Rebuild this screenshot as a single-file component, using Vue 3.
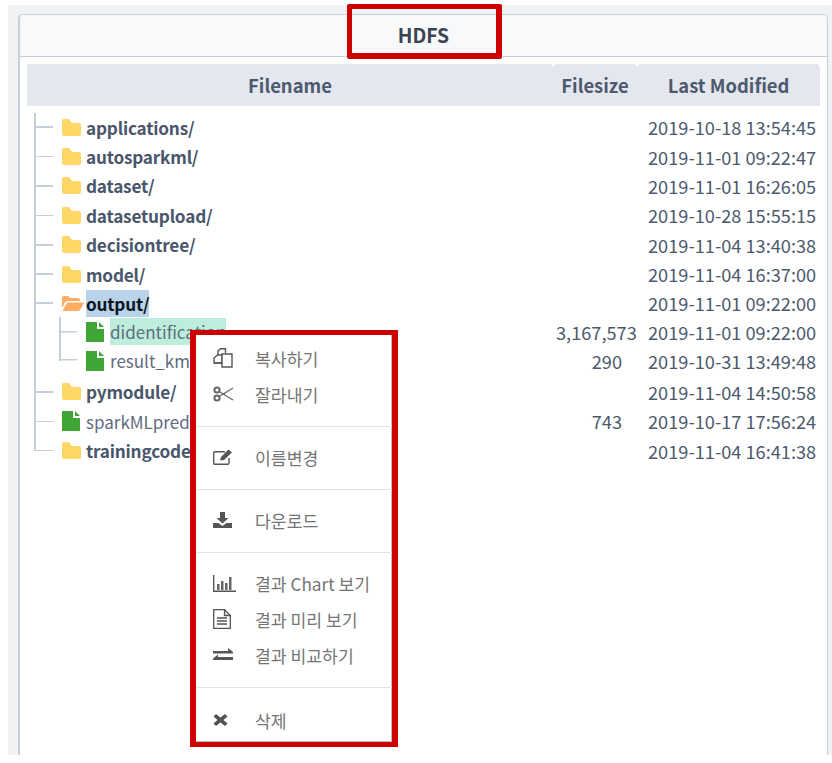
<script setup>
import { ref } from "vue";

const rows = ref([
  { name: "applications/", size: "", date: "2019-10-18 13:54:45", type: "folder" },
  { name: "autosparkml/", size: "", date: "2019-11-01 09:22:47", type: "folder" },
  { name: "dataset/", size: "", date: "2019-11-01 16:26:05", type: "folder" },
  { name: "datasetupload/", size: "", date: "2019-10-28 15:55:15", type: "folder" },
  { name: "decisiontree/", size: "", date: "2019-11-04 13:40:38", type: "folder" },
  { name: "model/", size: "", date: "2019-11-04 16:37:00", type: "folder" },
  { name: "output/", size: "", date: "2019-11-01 09:22:00", type: "open" },
  { name: "didentification", size: "3,167,573", date: "2019-11-01 09:22:00", type: "file", child: true, picked: true },
  { name: "result_kmeans", size: "290", date: "2019-10-31 13:49:48", type: "file", child: true, endChild: true },
  { name: "pymodule/", size: "", date: "2019-11-04 14:50:58", type: "folder" },
  { name: "sparkMLpredict", size: "743", date: "2019-10-17 17:56:24", type: "file" },
  { name: "trainingcode/", size: "", date: "2019-11-04 16:41:38", type: "folder" },
]);
</script>

<template>
  <div class="page">
    <div class="shell">
      <div class="panel">
        <div class="panel-head">HDFS</div>
        <div class="panel-body">
          <div class="grid-head">
            <div class="th th-first">Filename</div>
            <div class="th">Filesize</div>
            <div class="th th-last">Last Modified</div>
          </div>
          <div class="tree">
            <div
              v-for="row in rows"
              :key="row.name"
              class="row"
              :class="{ child: row.child, 'end-child': row.endChild, 'open-row': row.type === 'open' }"
            >
              <div class="cell-name">
                <span class="connector"></span>
                <svg v-if="row.type === 'folder'" class="ico folder" viewBox="0 0 19 17">
                  <path d="M0 2Q0 0 2 0H7L10 4H17Q19 4 19 6V15Q19 17 17 17H2Q0 17 0 15Z" fill="#ffd766" />
                </svg>
                <svg v-else-if="row.type === 'open'" class="ico open" viewBox="0 0 22 15">
                  <path d="M0 2Q0 0 2 0H6L8 2H16Q18 2 18 4V5H5Q4 5 3 6.500L0 12Z" fill="#ffad62" />
                  <path d="M5 6.500H21Q22.500 6.500 21.500 8L18 14Q17.500 15 16 15H2Q0.500 15 1 14Z" fill="#ffad62" />
                </svg>
                <svg v-else class="ico file" viewBox="0 0 18 20">
                  <path d="M0 0H11V7H18V20H0Z" fill="#3fa535" />
                  <path d="M13 0L18 5H13Z" fill="#3fa535" />
                </svg>
                <span
                  class="name"
                  :class="{ bold: row.type !== 'file', sel: row.type === 'open', picked: row.picked }"
                >{{ row.name }}</span>
              </div>
              <div class="cell-size">{{ row.size }}</div>
              <div class="cell-date">{{ row.date }}</div>
            </div>
          </div>
        </div>
      </div>
    </div>

    <div class="hl-title"></div>

    <div class="menu">
      <div class="menu-group first">
        <div class="item">
          <span class="mi-box">
            <svg width="20" height="20" viewBox="0 0 20 20" fill="none" stroke="#555" stroke-width="1.400">
              <path d="M5 7V3L7.500 0.800H12.500V5" />
              <path d="M1 15V10L4.500 7H9V15Z" />
              <path d="M9 6H19V19H9Z" fill="#fff" />
              <path d="M1 15H9" />
            </svg>
          </span>
          <span>복사하기</span>
        </div>
        <div class="item">
          <span class="mi-box">
            <svg width="21" height="16" viewBox="0 0 21 16" fill="none" stroke="#666" stroke-width="1.200">
              <circle cx="4" cy="4" r="2.600" stroke-width="2" />
              <circle cx="4" cy="12" r="2.600" stroke-width="2" />
              <path d="M6 5.500L20 14M6 10.500L20 2M10 8H12" />
            </svg>
          </span>
          <span>잘라내기</span>
        </div>
      </div>
      <div class="menu-group">
        <div class="item">
          <span class="mi-box">
            <svg width="21" height="16" viewBox="0 0 21 16" fill="none" stroke="#555" stroke-width="1.400">
              <path d="M16 9V14Q16 15.300 14.700 15.300H2Q0.700 15.300 0.700 14V4Q0.700 2.700 2 2.700H12" />
              <path d="M7 11.500L8 8L15.500 0.500L19 3.500L11 11Z" fill="#555" stroke="none" />
            </svg>
          </span>
          <span>이름변경</span>
        </div>
      </div>
      <div class="menu-group">
        <div class="item">
          <span class="mi-box">
            <svg width="19" height="16" viewBox="0 0 19 16">
              <path d="M7 0H12V6H15.500L9.500 11.500L3.500 6H7Z" fill="#555" />
              <path d="M0 11H5.500L9.500 14L13.500 11H19V16H0Z" fill="#555" />
            </svg>
          </span>
          <span>다운로드</span>
        </div>
      </div>
      <div class="menu-group">
        <div class="item">
          <span class="mi-box">
            <svg width="23" height="17" viewBox="0 0 23 17" fill="none">
              <path d="M0.700 0V16.300H23" stroke="#555" stroke-width="1.400" />
              <path d="M4 9H6.500V15H4ZM8 6H10.500V15H8ZM12 8H14.500V15H12ZM16 2H18.500V15H16Z" fill="#666" />
            </svg>
          </span>
          <span>결과 Chart 보기</span>
        </div>
        <div class="item">
          <span class="mi-box">
            <svg width="18" height="20" viewBox="0 0 18 20" fill="none" stroke="#555" stroke-width="1.300">
              <path d="M0.700 0.700H11.500L17.300 6.500V19.300H0.700Z" />
              <path d="M11.500 0.700V6.500H17.300" />
              <path d="M4 9H14M4 12H14M4 15H14" stroke-width="1.600" />
            </svg>
          </span>
          <span>결과 미리 보기</span>
        </div>
        <div class="item">
          <span class="mi-box">
            <svg width="20" height="14" viewBox="0 0 20 14">
              <path d="M0 3H15V0L20 4V5.500H0ZM20 9H5V6.500L0 10.500V12H20Z" fill="#555" />
            </svg>
          </span>
          <span>결과 비교하기</span>
        </div>
      </div>
      <div class="menu-group">
        <div class="item">
          <span class="mi-box">
            <svg width="15" height="12" viewBox="0 0 15 12">
              <path d="M0.500 2.500L3 0L7.500 3.500L12 0L14.500 2.500L10.500 6L14.500 9.500L12 12L7.500 8.500L3 12L0.500 9.500L4.500 6Z" fill="#555" />
            </svg>
          </span>
          <span>삭제</span>
        </div>
      </div>
    </div>
  </div>
</template>

<style scoped>
.page {
  position: relative;
  width: 832px;
  height: 763px;
  box-sizing: border-box;
  padding: 5px 0 8px 8px;
  overflow: hidden;
  font-family: "Noto Sans CJK KR", "Noto Sans", sans-serif;
  color: #4d5a6e;
  background: #fff;
}
.shell {
  height: 750px;
  box-sizing: border-box;
  padding: 9px 4px 0 10px;
  background: #f1f2f4;
}
.panel {
  height: 100%;
  box-sizing: border-box;
  background: #fff;
  border: 1px solid #c7d0da;
  border-left-width: 2px;
  border-bottom: none;
  border-radius: 5px 5px 0 0;
}
.panel-head {
  height: 42px;
  box-sizing: border-box;
  padding-bottom: 2px;
  display: flex;
  align-items: center;
  justify-content: center;
  background: #f8f9fb;
  border-bottom: 1px solid #c7d0da;
  border-radius: 5px 5px 0 0;
  font-size: 19.400px;
  font-weight: 700;
  color: #3c4453;
}
.panel-body {
  padding: 7px 7px 0;
}
.grid-head {
  display: grid;
  grid-template-columns: 526px 84px 183px;
  height: 42px;
  font-size: 18.400px;
  font-weight: 700;
  color: #4d5a6e;
}
.th {
  display: flex;
  align-items: center;
  justify-content: center;
  background: #e4e7ee;
  border-radius: 4px 4px 0 0;
}
.th-first {
  border-top-left-radius: 0;
}
.tree {
  padding-top: 6.500px;
  font-size: 18.200px;
  background: linear-gradient(#c5cfd9, #c5cfd9) 7px 7px / 2px 338px no-repeat;
}
.row {
  display: grid;
  grid-template-columns: 526px 84px 183px;
  height: 29.400px;
  align-items: center;
  white-space: nowrap;
}
.row.open-row {
  height: 28.400px;
}
.row.child {
  height: 29px;
}
.row.end-child {
  margin-bottom: 2px;
}
.cell-name {
  display: flex;
  align-items: center;
  height: 100%;
}
.connector {
  flex: none;
  width: 17px;
  height: 1.500px;
  margin-left: 9px;
  background: #c5cfd9;
}
.row.child .connector {
  align-self: stretch;
  height: auto;
  width: 16px;
  margin-left: 32px;
  border-left: 2px solid #c5cfd9;
  background: linear-gradient(#c5cfd9, #c5cfd9) 0 50% / 100% 1.500px no-repeat;
}
.row.end-child .connector {
  align-self: flex-start;
  height: 50%;
  background-position: 0 100%;
}
.ico {
  flex: none;
  margin-left: 9px;
}
.ico.folder {
  width: 19px;
  height: 17px;
  margin-right: 5px;
}
.ico.open {
  width: 22px;
  height: 15px;
  margin-right: 2px;
}
.ico.file {
  width: 18px;
  height: 20px;
  margin-right: 6px;
}
.name {
  font-size: 17px;
  color: #5f6c80;
  line-height: 27px;
}
.name.bold {
  font-size: 17.200px;
  letter-spacing: -0.200px;
  font-weight: 700;
  color: #49566b;
}
.name.sel {
  background: #b8d3ea;
  color: #0d1520;
}
.name.picked {
  background: #bdeedb;
}
.cell-size {
  width: 66px;
  margin-left: 3px;
  text-align: right;
}
.cell-date {
  padding-left: 11px;
}
.hl-title {
  position: absolute;
  left: 347px;
  top: 4px;
  width: 155px;
  height: 55px;
  box-sizing: border-box;
  border: solid #cc0000;
  border-width: 5px 6px 6px 5px;
  border-radius: 2px;
}
.menu {
  position: absolute;
  left: 190px;
  top: 330px;
  width: 208px;
  height: 417px;
  box-sizing: border-box;
  border: solid #cc0000;
  border-width: 5px 6px 5px 6px;
  background: #fff;
  font-size: 17.200px;
  color: #757575;
  box-shadow: inset -1px -1px 0 #b9bdc2;
}
.menu-group {
  padding: 12px 0 14px;
  border-bottom: 1px solid #e2e2e2;
}
.menu-group.first {
  padding-top: 5px;
}
.menu-group:last-child {
  padding: 14px 0 0;
  border-bottom: none;
}
.item {
  display: flex;
  align-items: center;
  height: 36px;
  padding-left: 17px;
  white-space: nowrap;
}
.mi-box {
  flex: none;
  display: flex;
  align-items: center;
  width: 42px;
}
</style>

<style>
body {
  margin: 0;
}
</style>
